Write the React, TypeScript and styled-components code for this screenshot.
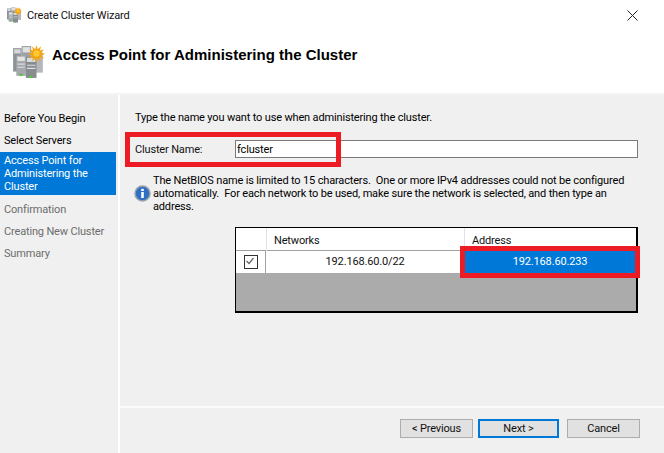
import React from "react";
import styled, { createGlobalStyle } from "styled-components";

const Global = createGlobalStyle`
  html, body { margin: 0; padding: 0; background: #fff; }
  body { font-family: Roboto, "Liberation Sans", sans-serif; font-size: 11px; letter-spacing: -0.16px; color: #000; }
`;
const Win = styled.div`width: 664px; height: 453px; display: flex; flex-direction: column; overflow: hidden; background: #fff;`;
const TitleBar = styled.div`height: 30px; display: flex; align-items: center; padding-left: 6px; gap: 5px; color: #111;`;
const Close = styled.div`margin-left: auto; width: 11px; height: 11px; margin-right: 26px; display: flex;`;
const Header = styled.div`height: 63px; display: flex; align-items: flex-start; padding: 15px 0 0 11px; box-sizing: border-box; gap: 7px;`;
const Heading = styled.h1`margin: 1px 0 0; font: bold 15px/18px "Liberation Sans", Arial, sans-serif; letter-spacing: 0;`;
const Body = styled.div`flex: 1; display: flex; gap: 2px; border-top: 2px solid #f4f4f4; min-height: 0;`;
const Side = styled.nav`flex: none; width: 118px; background: #f0f0f0; padding-top: 14px; box-sizing: border-box; display: flex; flex-direction: column; align-items: stretch;`;
const Step = styled.div<{ $state?: "active" | "off" }>`
  width: 116px; box-sizing: border-box; line-height: 13px;
  padding: ${p => (p.$state === "active" ? "2px 2px 2px 4px" : "3px 2px 3px 4px")};
  min-height: ${p => (p.$state === "active" ? "43px" : "22px")};
  margin: ${p => (p.$state === "active" ? "-1px 0 5px" : "0")};
  color: ${p => (p.$state === "active" ? "#fff" : p.$state === "off" ? "#6d6d6d" : "#000")};
  background: ${p => (p.$state === "active" ? "#0078d7" : "transparent")};
`;
const Main = styled.main`flex: 1; min-width: 0; background: #f0f0f0; display: flex; flex-direction: column;`;
const Content = styled.div`height: 311px; box-sizing: border-box; padding: 15px 26px 0 15px; display: flex; flex-direction: column;`;
const Intro = styled.p`margin: 0; line-height: 15px; height: 15px;`;
const NameRow = styled.div`position: relative; display: flex; align-items: center; height: 18px; margin-top: 15px;`;
const NameLabel = styled.label`width: 100px; color: #111;`;
const NameInput = styled.div`flex: 1; height: 18px; box-sizing: border-box; border: 1px solid #7a7a7a; background: #fff; padding-left: 1px; line-height: 17px; color: #000;`;
const RedBox = styled.div`position: absolute; box-sizing: border-box; border: 5px solid #ed1c24; pointer-events: none;`;
const NameMark = styled(RedBox)`left: -10px; top: -8px; width: 216px; height: 35px;`;
const Note = styled.div`display: flex; align-items: center; gap: 2px; margin: 16px 0 0 -1px;`;
const NoteText = styled.p`margin: 0; line-height: 13px; white-space: nowrap;`;
const Grid = styled.div`margin: 14px 0 0 100px; height: 86px; box-sizing: border-box; border: 2px solid #000; border-width: 1px 2px 2px 1px; background: #ababab; display: flex; flex-direction: column;`;
const GridRow = styled.div`display: grid; grid-template-columns: 30px 198px 1fr; background: #fff;`;
const GridHead = styled(GridRow)`height: 22px; border-bottom: 1px solid #a0a0a0; box-sizing: content-box;`;
const HeadCell = styled.div`padding-left: 7px; line-height: 25px; border-left: 1px solid #e3e3e3; color: #111; &:first-child { border-left: 0; }`;
const DataRow = styled(GridRow)`height: 22px;`;
const CheckCell = styled.div`display: flex; align-items: center; justify-content: center; border-right: 1px solid #a0a0a0;`;
const CheckBox = styled.div`width: 12px; height: 12px; border: 1px solid #333; display: flex; background: #fff;`;
const Cell = styled.div`text-align: center; line-height: 21px; color: #111;`;
const AddressCell = styled(Cell)`position: relative; background: #0078d7; color: #fff; margin: 0 1px 0 1px;`;
const AddressMark = styled(RedBox)`left: -5px; top: -5px; right: -5px; bottom: -5px;`;
const Footer = styled.div`flex: 1; border-top: 2px solid #fbfbfb; display: flex; justify-content: flex-end; gap: 5px; padding: 11px 24px 0 0; align-items: flex-start;`;
const Button = styled.button<{ $primary?: boolean; $w: number }>`
  width: ${p => p.$w}px; height: 19px; box-sizing: border-box; padding: 1px 0 0; font: inherit; letter-spacing: inherit; line-height: 14px; color: #111;
  background: #e1e1e1; border: ${p => (p.$primary ? "2px solid #0078d7" : "1px solid #adadad")};
`;
const CancelButton = styled(Button)`margin-left: 3px;`;

const Servers = ({ size }: { size: number }) => (
  <svg width={size} height={size} viewBox="0 0 32 32" style={{ flex: "none" }}>
    <rect x="2" y="3" width="8" height="22" fill="#8d9297" />
    <rect x="3" y="4" width="6" height="4" fill="#d5d8da" />
    <rect x="10" y="1" width="9" height="24" fill="#9ca1a5" />
    <rect x="11" y="2" width="7" height="5" fill="#dfe1e3" />
    <rect x="19" y="7" width="11" height="19" fill="#b5b8ba" />
    <rect x="5" y="10" width="9" height="19" fill="#a5a9ad" />
    <rect x="6" y="11" width="7" height="4" fill="#e2e4e5" />
    <rect x="14" y="11" width="10" height="20" fill="#878c91" />
    <rect x="15" y="12" width="8" height="4" fill="#d9dbdd" />
    <path d="M6 18h7M6 21h7M15 19h8M15 22h8" stroke="#dcdee0" strokeWidth="1" />
    <rect x="8" y="27" width="3" height="2" fill="#54c23c" />
    <rect x="17" y="29" width="3" height="2" fill="#54c23c" />
    <path d="M24 0l1.2 4 3-2.8-1 4 4-1-2.8 3 4 1.2-4 1.2 2.8 3-4-1 1 4-3-2.8-1.2 4-1.2-4-3 2.8 1-4-4 1 2.8-3-4-1.2 4-1.2-2.8-3 4 1-1-4 3 2.8z" fill="#f6a312" />
    <circle cx="24" cy="8" r="3" fill="#ffc935" />
  </svg>
);
const InfoIcon = () => (
  <svg width="17" height="17" viewBox="0 0 17 17" style={{ flex: "none" }}>
    <circle cx="8.5" cy="8.5" r="7.5" fill="#2f6fc4" stroke="#9aa3ad" strokeWidth="1.6" />
    <rect x="7.2" y="7" width="2.6" height="6" fill="#fff" />
    <rect x="7.2" y="3.8" width="2.6" height="2.2" fill="#fff" />
  </svg>
);

export default function App() {
  return (
    <Win>
      <Global />
      <TitleBar>
        <Servers size={16} />
        <span>Create Cluster Wizard</span>
        <Close>
          <svg width="11" height="11" viewBox="0 0 11 11"><path d="M.5.5l10 10M10.5.5l-10 10" stroke="#222" strokeWidth="1" /></svg>
        </Close>
      </TitleBar>
      <Header>
        <Servers size={34} />
        <Heading>Access Point for Administering the Cluster</Heading>
      </Header>
      <Body>
        <Side>
          <Step>Before You Begin</Step>
          <Step>Select Servers</Step>
          <Step $state="active">Access Point for Administering the Cluster</Step>
          <Step $state="off">Confirmation</Step>
          <Step $state="off">Creating New Cluster</Step>
          <Step $state="off">Summary</Step>
        </Side>
        <Main>
          <Content>
            <Intro>Type the name you want to use when administering the cluster.</Intro>
            <NameRow>
              <NameLabel>Cluster Name:</NameLabel>
              <NameInput>fcluster</NameInput>
              <NameMark />
            </NameRow>
            <Note>
              <InfoIcon />
              <NoteText>
                The NetBIOS name is limited to 15 characters.&nbsp; One or more IPv4 addresses could not be configured<br />
                automatically.&nbsp; For each network to be used, make sure the network is selected, and then type an<br />
                address.
              </NoteText>
            </Note>
            <Grid>
              <GridHead>
                <HeadCell />
                <HeadCell>Networks</HeadCell>
                <HeadCell>Address</HeadCell>
              </GridHead>
              <DataRow>
                <CheckCell>
                  <CheckBox>
                    <svg width="10" height="10" viewBox="0 0 10 10"><path d="M1.5 5l2.5 2.5L8.5 2" fill="none" stroke="#666" strokeWidth="1.2" /></svg>
                  </CheckBox>
                </CheckCell>
                <Cell>192.168.60.0/22</Cell>
                <AddressCell>192.168.60.233<AddressMark /></AddressCell>
              </DataRow>
            </Grid>
          </Content>
          <Footer>
            <Button $w={73}>&lt; Previous</Button>
            <Button $w={81} $primary>Next &gt;</Button>
            <CancelButton $w={73}>Cancel</CancelButton>
          </Footer>
        </Main>
      </Body>
    </Win>
  );
}
